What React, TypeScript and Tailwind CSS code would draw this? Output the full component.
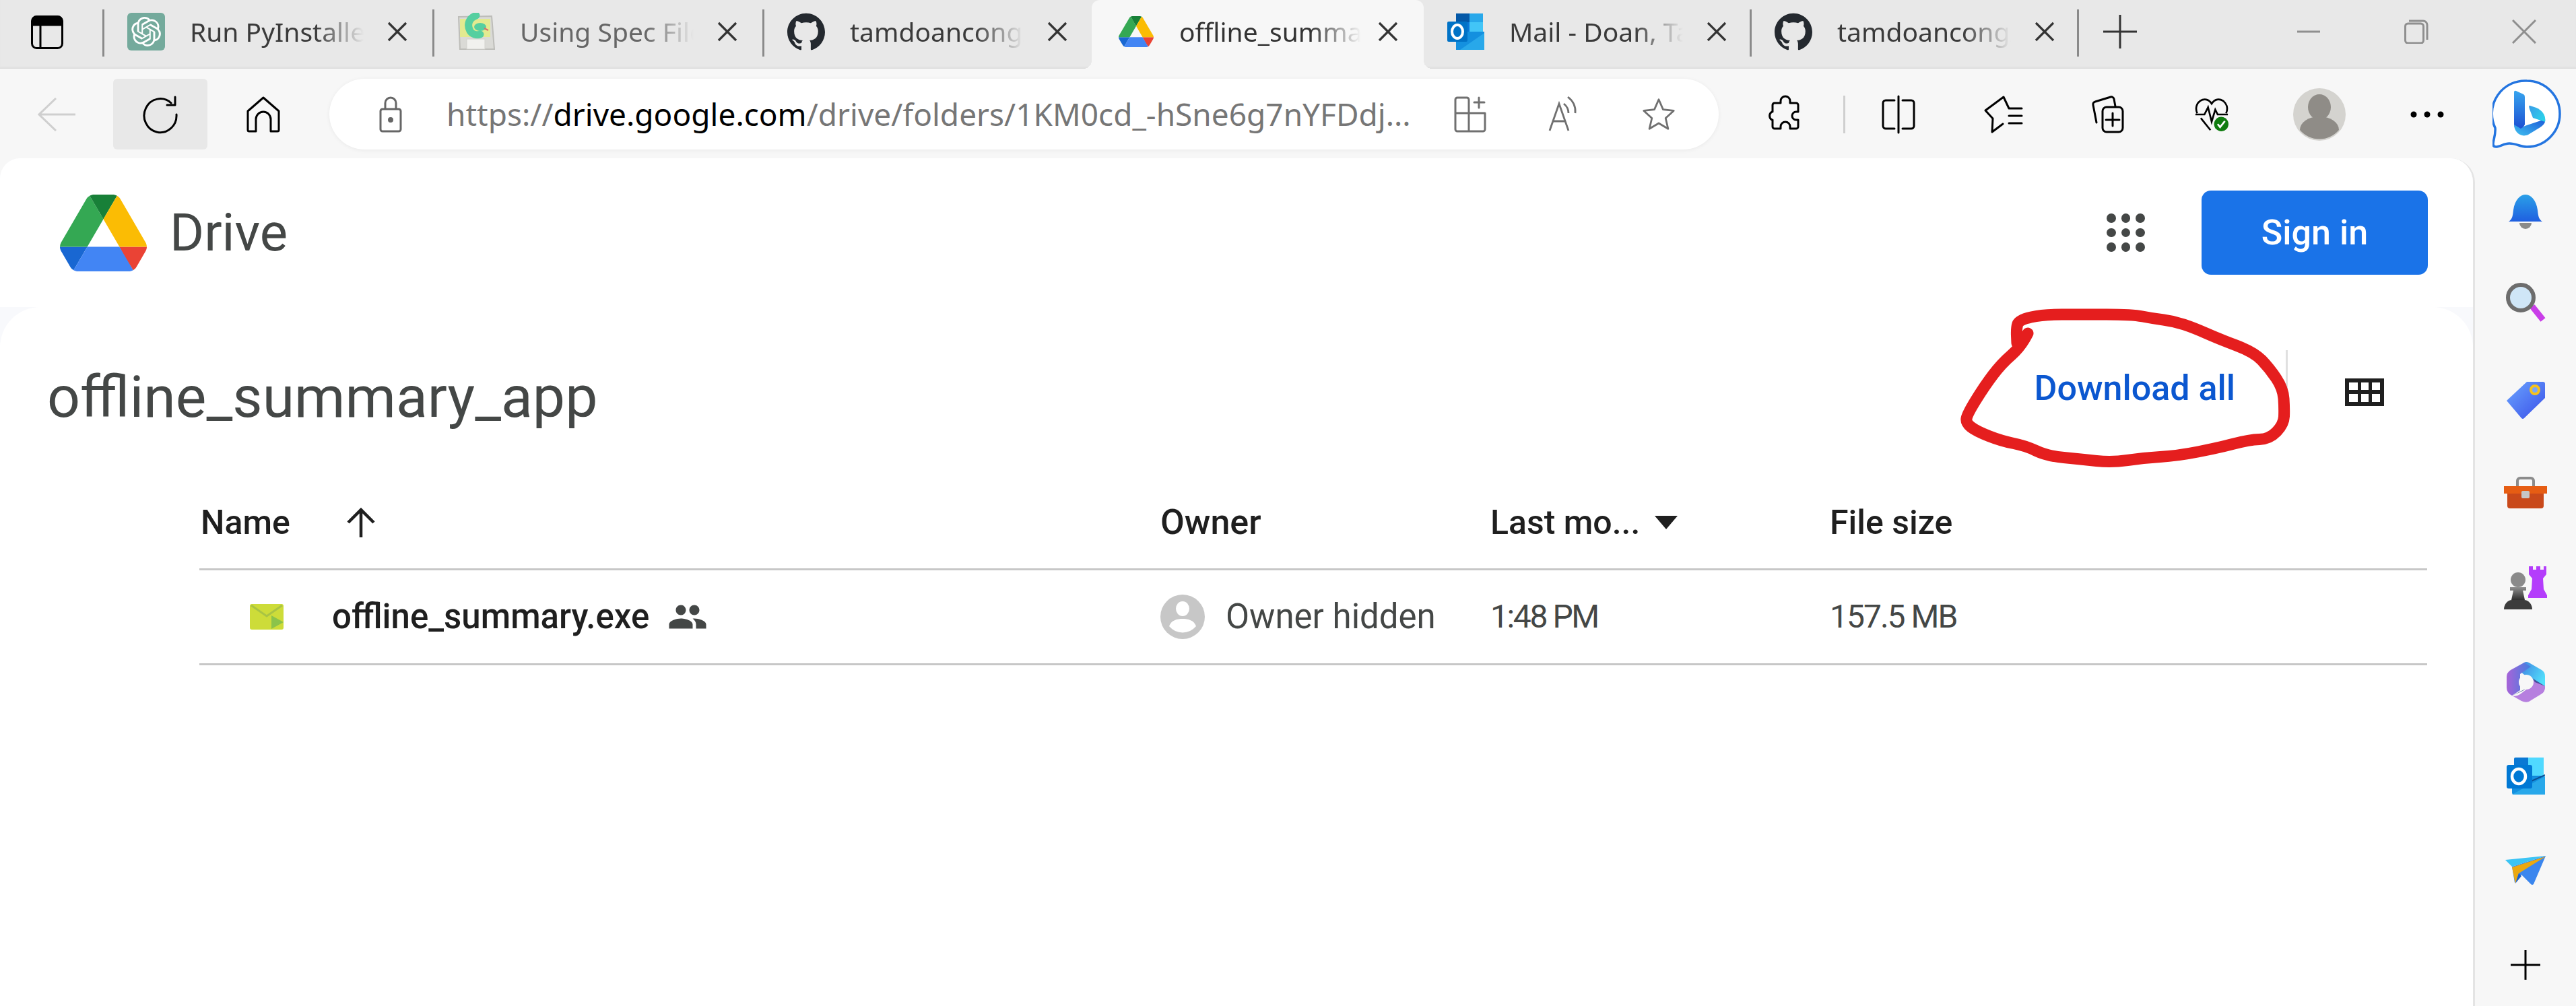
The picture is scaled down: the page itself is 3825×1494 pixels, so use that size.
import React from 'react';
import { SiOpenai, SiGithub } from 'react-icons/si';

const scribble: [number, number][] = [
  [3011, 495], [3001, 515], [2972, 540], [2947, 573], [2921, 615], [2919, 628], [2934, 640], [2972, 655],
  [3008, 662], [3039, 677], [3090, 682], [3136, 687], [3182, 680], [3233, 677], [3294, 665], [3340, 653],
  [3370, 652], [3391, 630], [3392, 607], [3390, 577], [3370, 547], [3347, 523], [3294, 503], [3258, 487],
  [3228, 477], [3197, 473], [3166, 467], [3090, 467], [3034, 467], [2998, 475], [2994, 487], [2995, 510],
];

const scribblePath = () => {
  let d = `M${scribble[0][0]} ${scribble[0][1]}`;
  for (let i = 1; i < scribble.length - 1; i++) {
    const [x, y] = scribble[i];
    const [nx, ny] = scribble[i + 1];
    d += ` Q${x} ${y} ${(x + nx) / 2} ${(y + ny) / 2}`;
  }
  const last = scribble[scribble.length - 1];
  return `${d} L${last[0]} ${last[1]}`;
};

const X = ({ color = '#333' }: { color?: string }) => (
  <svg viewBox="0 0 30 30" className="w-[30px] h-[30px] flex-none">
    <path d="M2 2 28 28M28 2 2 28" stroke={color} strokeWidth="3.2" fill="none" />
  </svg>
);

const Sep = () => <div className="w-[3px] h-[70px] bg-[#8a8a8a] flex-none mb-[4px]" />;

const DriveLogo = ({ className }: { className: string }) => (
  <svg viewBox="0 0 87.3 78" className={className} preserveAspectRatio="none">
    <path d="m6.6 66.85 3.85 6.65c.8 1.4 1.95 2.5 3.3 3.3l13.75-23.8h-27.5c0 1.55.4 3.1 1.2 4.5z" fill="#1967d2" />
    <path d="m43.65 25-13.75-23.8c-1.35.8-2.5 1.9-3.3 3.3l-25.4 44a9.06 9.06 0 0 0 -1.2 4.5h27.5z" fill="#34a853" />
    <path d="m73.55 76.8c1.35-.8 2.5-1.9 3.3-3.3l1.6-2.75 7.65-13.25c.8-1.4 1.2-2.95 1.2-4.5h-27.502l5.852 11.5z" fill="#ea4335" />
    <path d="m43.65 25 13.75-23.8c-1.35-.8-2.9-1.2-4.5-1.2h-18.5c-1.6 0-3.15.45-4.5 1.2z" fill="#188038" />
    <path d="m59.8 53h-32.3l-13.75 23.8c1.35.8 2.9 1.2 4.5 1.2h50.8c1.6 0 3.15-.45 4.5-1.2z" fill="#4285f4" />
    <path d="m73.4 26.5-12.7-22c-.8-1.4-1.95-2.5-3.3-3.3l-13.75 23.8 16.15 28h27.45c0-1.55-.4-3.1-1.2-4.5z" fill="#fbbc04" />
  </svg>
);

const GptIcon = () => (
  <div className="w-[56px] h-[56px] bg-[#74aa9c] rounded-[6px] flex items-center justify-center">
    <SiOpenai className="w-[44px] h-[44px] text-white" />
  </div>
);

const FloppyIcon = () => (
  <svg viewBox="0 0 56 56" className="w-[56px] h-[56px]">
    <path d="M2 6 51 5 55 54 4 54z" fill="#dadad6" stroke="#bdbdb9" strokeWidth="2" />
    <rect x="4" y="9" width="45" height="27" fill="#e2ea90" />
    <path d="M28 4C17 8 14 18 19 27c3 5 10 7 15 5" fill="none" stroke="#55cfa0" strokeWidth="11" strokeLinecap="round" />
    <ellipse cx="34" cy="21" rx="9" ry="6" fill="#55cfa0" />
    <path d="M40 23 46 26" stroke="#d86a6a" strokeWidth="2" />
    <rect x="14" y="39" width="27" height="15" fill="#f1f1ee" stroke="#d2d2ce" />
  </svg>
);

const GithubIcon = () => <SiGithub className="w-[56px] h-[56px] text-[#24292f]" />;

const OutlookIcon = () => (
  <svg viewBox="0 0 56 56" className="w-[56px] h-[56px]">
    <rect x="14" y="1" width="40" height="54" rx="2" fill="#0a76d6" />
    <rect x="14" y="1" width="20" height="13" fill="#0358a7" />
    <rect x="34" y="1" width="20" height="13" fill="#28a8ea" />
    <rect x="34" y="14" width="20" height="14" fill="#50d9ff" opacity="0.8" />
    <path d="M14 28 56 28V55H14z" fill="#1490df" />
    <path d="M20 55 56 30V55z" fill="#28a8ea" />
    <rect x="1" y="13" width="30" height="30" rx="2" fill="#0072c6" />
    <ellipse cx="16" cy="28" rx="8" ry="10" fill="none" stroke="#fff" strokeWidth="4" />
  </svg>
);

const Tab = ({ icon, label, active, grey, className }: {
  icon: React.ReactNode; label: string; active?: boolean; grey?: boolean; className: string;
}) => (
  <div className={`flex-none h-full flex items-center pb-[9px] relative ${className}`}>
    <div className="w-[56px] h-[56px] flex-none flex items-center justify-center">{icon}</div>
    <div
      className={`whitespace-nowrap overflow-hidden flex-none text-[39px] leading-[54px] [mask-image:linear-gradient(to_right,#000_72%,transparent_100%)] ${
        active ? 'ml-[36px] w-[270px] text-[#333]' : grey ? 'ml-[37px] w-[258px] text-[#666]' : 'ml-[37px] w-[258px] text-[#3a3a3a]'
      }`}
    >
      {label}
    </div>
    <div className={active ? 'ml-[25px]' : 'ml-[35px]'}><X /></div>
    {active && (
      <>
        <div className="absolute bottom-0 -left-[12px] w-[12px] h-[12px] bg-[radial-gradient(circle_at_0_0,transparent_12px,#f7f7f7_12px)]" />
        <div className="absolute bottom-0 -right-[12px] w-[12px] h-[12px] bg-[radial-gradient(circle_at_100%_0,transparent_12px,#f7f7f7_12px)]" />
      </>
    )}
  </div>
);

const Ico = ({ children, className = 'w-[50px] h-[56px]', vb = '0 0 50 56' }: { children: React.ReactNode; className?: string; vb?: string }) => (
  <svg viewBox={vb} className={`flex-none overflow-visible ${className}`} fill="none" stroke="#000" strokeWidth="3" strokeLinejoin="round" strokeLinecap="round">
    {children}
  </svg>
);

const BingIcon = () => (
  <svg viewBox="0 0 102 105" className="w-[102px] h-[105px] flex-none">
    <defs>
      <linearGradient id="bb" x1="0" y1="0" x2="0" y2="1">
        <stop offset="0" stopColor="#37a5ee" />
        <stop offset="1" stopColor="#1b49d0" />
      </linearGradient>
      <linearGradient id="bc" x1="0" y1="0" x2="1" y2="0.6">
        <stop offset="0" stopColor="#3b9ce8" />
        <stop offset="1" stopColor="#2bd0ea" />
      </linearGradient>
      <linearGradient id="bd" x1="0" y1="1" x2="1" y2="0">
        <stop offset="0" stopColor="#3fc0f0" />
        <stop offset="1" stopColor="#1d5ad8" />
      </linearGradient>
    </defs>
    <path d="M51 3a49 49 0 0 1 0 98c-10 0-16-5-26-5-8 0-14 5-20 5-3 0-4-2-4-4 0-6 4-14 3-24A49 49 0 0 1 51 3z" fill="#fff" stroke="#2475e0" strokeWidth="3.5" />
    <path d="M32 20q0-3 3-2l11 5q2 1 2 4V68l-6 10q-10-3-10-10z" fill="url(#bb)" />
    <path d="M32 68c0 11 10 20 21 15l18-11c6-4 8-8 7-12L48 70l-6 4z" fill="url(#bd)" />
    <path d="M56 40q-3-1-1 5l5 13 18 6c2-11-6-18-13-21z" fill="url(#bc)" />
  </svg>
);

const SideIcon = ({ children }: { children: React.ReactNode }) => (
  <svg viewBox="0 0 64 56" className="w-[64px] h-[56px] flex-none overflow-visible">{children}</svg>
);

const Sidebar = () => (
  <div className="w-[150px] flex-none flex flex-col items-center pt-[50px] gap-[84px]">
    <SideIcon>
      <defs>
        <linearGradient id="s1" x1="0" y1="0" x2="0" y2="1"><stop offset="0" stopColor="#2aa0e8" /><stop offset="1" stopColor="#1f5fe0" /></linearGradient>
      </defs>
      <path d="M23 46a9 9 0 0 0 18 0z" fill="#8a8a8a" />
      <path d="M7 44c6-4 6-9 7-17 2-16 11-23 18-23s16 7 18 23c1 8 1 13 7 17z" fill="url(#s1)" />
    </SideIcon>
    <SideIcon>
      <path d="M42 30 58 50" stroke="#c93ee8" strokeWidth="9" strokeLinecap="butt" />
      <circle cx="25" cy="17" r="19" fill="#cfe6f7" stroke="#6d6d6d" strokeWidth="6" />
    </SideIcon>
    <SideIcon>
      <defs>
        <linearGradient id="s3" x1="0" y1="0" x2="1" y2="1"><stop offset="0" stopColor="#6aa5ff" /><stop offset="1" stopColor="#3a4fe8" /></linearGradient>
      </defs>
      <path d="M4 30 34 2H58a3 3 0 0 1 3 3V26L30 56a3 3 0 0 1-4 0z" fill="url(#s3)" />
      <circle cx="46" cy="14" r="6" fill="#7aa8f8" stroke="#f6c21c" strokeWidth="4" />
    </SideIcon>
    <SideIcon>
      <path d="M20 18V9a4 4 0 0 1 4-4h16a4 4 0 0 1 4 4v9" fill="none" stroke="#8c8c8c" strokeWidth="4" />
      <path d="M0 17H64V28H0z" fill="#e65d13" />
      <path d="M5 28H59V46a4 4 0 0 1-4 4H9a4 4 0 0 1-4-4z" fill="#c9491a" />
      <rect x="26" y="24" width="12" height="11" rx="2" fill="#c6c6c6" />
    </SideIcon>
    <svg viewBox="0 0 64 64" className="w-[64px] h-[64px] -my-[4px] flex-none">
      <defs>
        <linearGradient id="s5" x1="0" y1="0" x2="0" y2="1"><stop offset="0" stopColor="#8f8f8f" /><stop offset="1" stopColor="#2f2f2f" /></linearGradient>
      </defs>
      <path d="M37 0h6v5h5V0h6v5h5V0h4v12l-5 6 1 16 5 9v4H36v-4l5-9 1-16-5-6z" fill="#b43dfb" />
      <circle cx="21" cy="20" r="11" fill="#8a8a8a" />
      <path d="M9 31H33V36H28L31 50H11L14 36H9z" fill="url(#s5)" />
      <path d="M0 64c0-8 6-14 12-14H30c6 0 12 6 12 14z" fill="#3c3c3c" />
    </svg>
    <svg viewBox="0 0 57 60" className="w-[57px] h-[60px] -my-[2px] flex-none">
      <defs>
        <linearGradient id="s6a" x1="0" y1="0" x2="1" y2="0"><stop offset="0" stopColor="#a863d8" /><stop offset="1" stopColor="#3f7fe0" /></linearGradient>
        <linearGradient id="s6b" x1="0" y1="0" x2="1" y2="0.6"><stop offset="0" stopColor="#3f7fe0" /><stop offset="1" stopColor="#52e0fc" /></linearGradient>
      </defs>
      <path d="M26 1Q29-1 33 1L52 12Q57 15 57 21V40L36 27 20 14z" fill="url(#s6b)" />
      <path d="M26 1 6 12Q0 16 0 22V38Q0 46 8 50L20 42V18L36 7z" fill="url(#s6a)" />
      <path d="M57 38Q57 45 51 48L33 59Q28 61 22 58L8 50Q14 52 20 48L36 36 40 26 57 36z" fill="#b67fdf" />
      <path d="M38 24 57 36 42 30zM8 50 20 44 36 36 22 44z" fill="#1d3a80" opacity="0.7" />
      <circle cx="29" cy="30" r="11" fill="#f7f7f7" />
    </svg>
    <svg viewBox="0 0 57 56" className="w-[57px] h-[56px] flex-none">
      <rect x="11" y="0" width="44" height="54" rx="2" fill="#0a78d4" />
      <rect x="32" y="0" width="23" height="27" fill="#50d9ff" />
      <path d="M8 28H57V52a3 3 0 0 1-3 3H11a3 3 0 0 1-3-3z" fill="#1490df" />
      <path d="M8 55 57 28V55z" fill="#28a8ea" />
      <path d="M30 38 57 26" stroke="#0c4f94" strokeWidth="2" />
      <rect x="0" y="11" width="38" height="35" rx="3" fill="#0078d4" />
      <ellipse cx="18" cy="28" rx="10" ry="11" fill="none" stroke="#fff" strokeWidth="4.5" />
    </svg>
    <svg viewBox="0 0 60 44" className="w-[60px] h-[44px] my-[6px] flex-none">
      <path d="M60 0 42 42Q40 44 38 42L24 28 14 40 10 16z" fill="#3b86ee" />
      <path d="M0 6 60 0 10 16z" fill="#3cc4f4" />
      <path d="M10 17 60 1 20 26 15 41z" fill="#eca80f" />
      <path d="M20 26 15 41 24 30z" fill="#1a5fc8" />
    </svg>
    <svg viewBox="0 0 44 44" className="w-[44px] h-[44px] mt-[6px] flex-none" stroke="#000" strokeWidth="3">
      <path d="M0 22H44M22 0V44" />
    </svg>
  </div>
);

const Row = ({ children, className }: { children: React.ReactNode; className: string }) => (
  <div className={`grid grid-cols-[1427px_492px_502px_1fr] items-center border-b-[3px] border-[#c7c7c7] ${className}`}>{children}</div>
);

export default function App() {
  return (
    <div className="w-[3825px] h-[1494px] overflow-hidden relative flex flex-col bg-[#f7f7f7] font-['Roboto',sans-serif]">
      {/* tab strip */}
      <div className="h-[102px] flex-none flex items-center bg-[#e8e8e8] font-['Noto_Sans',sans-serif] shadow-[inset_0_-3px_3px_-2px_#d4d4d4]">
        <div className="w-[152px] flex-none pl-[46px] pb-[6px]">
          <svg viewBox="0 0 48 50" className="w-[48px] h-[50px]" fill="none" stroke="#000" strokeWidth="3">
            <rect x="1.5" y="1.5" width="45" height="47" rx="7" />
            <path d="M2 14V8a6 6 0 0 1 6-6h32a6 6 0 0 1 6 6v6z" fill="#000" />
            <path d="M14 13V48" />
          </svg>
        </div>
        <Sep />
        <Tab className="w-[487px] pl-[34px]" icon={<GptIcon />} label="Run PyInstaller" />
        <Sep />
        <Tab className="w-[487px] pl-[34px]" icon={<FloppyIcon />} label="Using Spec Files" grey />
        <Sep />
        <Tab className="w-[486px] pl-[34px]" icon={<GithubIcon />} label="tamdoancong/" />
        <Tab className="w-[493px] pl-[38px] bg-[#f7f7f7] rounded-t-[12px]" icon={<DriveLogo className="w-[52px] h-[46px]" />} label="offline_summary" active />
        <Tab className="w-[484px] pl-[34px]" icon={<OutlookIcon />} label="Mail - Doan, Tam" />
        <Sep />
        <Tab className="w-[483px] pl-[34px]" icon={<GithubIcon />} label="tamdoancong/" />
        <Sep />
        <svg viewBox="0 0 50 50" className="w-[50px] h-[50px] ml-[36px] flex-none mb-[8px]" stroke="#333" strokeWidth="3">
          <path d="M0 25H50M25 0V50" />
        </svg>
        <div className="ml-auto pr-[59px] flex items-center gap-[124px] pb-[8px]">
          <svg viewBox="0 0 36 36" className="w-[36px] h-[36px]" stroke="#8f8f8f" strokeWidth="3"><path d="M1 18H35" /></svg>
          <svg viewBox="0 0 36 36" className="w-[36px] h-[36px]" stroke="#8f8f8f" strokeWidth="3" fill="none">
            <rect x="1.5" y="6" width="27" height="29" rx="4" />
            <path d="M7 2H28a6 6 0 0 1 6 6V30" />
          </svg>
          <svg viewBox="0 0 36 36" className="w-[36px] h-[36px]" stroke="#8f8f8f" strokeWidth="3"><path d="M1 1 35 35M35 1 1 35" /></svg>
        </div>
      </div>

      {/* toolbar */}
      <div className="h-[133px] flex-none flex items-center pl-[56px] pt-[2px]">
        <svg viewBox="0 0 56 50" className="w-[56px] h-[50px] flex-none" fill="none" stroke="#cfcfcf" strokeWidth="3">
          <path d="M2 25H56M27 1 2 25l25 24" />
        </svg>
        <div className="ml-[56px] w-[140px] h-[105px] flex-none rounded-[6px] bg-[#e8e8e8] flex items-center justify-center">
          <Ico className="w-[56px] h-[56px]" vb="0 0 56 56">
            <path d="M44 11A24 25 0 1 0 52 28" />
            <path d="M50 2V14H38" />
          </Ico>
        </div>
        <Ico className="w-[50px] h-[54px] ml-[58px]" vb="0 0 50 54">
          <path d="M25 2 48 22V50a2 2 0 0 1-2 2H36V34a11 11 0 0 0-22 0V52H4a2 2 0 0 1-2-2V22z" />
        </Ico>
        <div className="ml-[73px] w-[2063px] h-[105px] flex-none rounded-full bg-white shadow-[0_1px_6px_#0000000f] flex items-center pl-[74px] pr-[64px]">
          <svg viewBox="0 0 34 54" className="w-[34px] h-[54px] flex-none" fill="none" stroke="#666" strokeWidth="3">
            <rect x="2" y="19" width="30" height="33" rx="3" />
            <path d="M9 19V10a8 8 0 0 1 16 0v9" />
            <circle cx="17" cy="35" r="2.5" fill="#666" />
          </svg>
          <div className="ml-[66px] flex-none text-[46px] font-['Noto_Sans',sans-serif] text-[#767676] whitespace-nowrap">
            https://<span className="text-black">drive.google.com</span>/drive/folders/1KM0cd_-hSne6g7nYFDdj...
          </div>
          <div className="ml-auto flex items-center gap-[90px]">
            <Ico vb="0 0 50 56" className="w-[50px] h-[56px]">
              <g stroke="#707070">
                <path d="M3 26V6a3 3 0 0 1 3-3h14a3 3 0 0 1 3 3v20zM23 26H47V50a3 3 0 0 1-3 3H6a3 3 0 0 1-3-3V26M23 26V53M38 3V18M31 10H46" />
              </g>
            </Ico>
            <svg viewBox="0 0 50 56" className="w-[50px] h-[56px] flex-none" fill="none" stroke="#707070" strokeWidth="2.8">
              <path d="M3 52 17 12 31 52M8 38H26M30 2c8 6 12 14 11 24M24 12c5 4 7 8 7 14" />
            </svg>
            <Ico vb="0 0 54 54" className="w-[50px] h-[50px]">
              <path stroke="#707070" d="M27 3 34 19 51 21 38 33 42 50 27 41 12 50 16 33 3 21 20 19z" />
            </Ico>
          </div>
        </div>
        <Ico className="w-[50px] h-[56px] ml-[74px]" vb="0 0 50 56">
          <path d="M18 8a7 7 0 0 1 14 0v3h9a3 3 0 0 1 3 3v10h-3a6 6 0 0 0 0 12h3v10a3 3 0 0 1-3 3h-9v-3a7 7 0 0 0-14 0v3H9a3 3 0 0 1-3-3V36H5a7 7 0 0 1 0-12h1V14a3 3 0 0 1 3-3h9z" />
        </Ico>
        <div className="ml-[61px] w-[3px] h-[56px] bg-[#cfcfcf] flex-none" />
        <Ico className="w-[50px] h-[56px] ml-[54px]" vb="0 0 50 56">
          <path d="M19 7H6a4 4 0 0 0-4 4v34a4 4 0 0 0 4 4h13M31 7h13a4 4 0 0 1 4 4v34a4 4 0 0 1-4 4H31M25 1V55" />
        </Ico>
        <Ico className="w-[50px] h-[56px] ml-[106px]" vb="0 0 50 56">
          <path d="M33 19 25 2-2 22 9 34 8 54 24 42M33 19H52M33 30H52M33 41H52" />
        </Ico>
        <Ico className="w-[50px] h-[56px] ml-[104px]" vb="0 0 50 56">
          <path d="M9 40 4 14a4 4 0 0 1 3-5L30 2a4 4 0 0 1 5 3l2 11" />
          <rect x="18" y="17" width="30" height="37" rx="6" />
          <path d="M33 26V45M23 36H43" />
        </Ico>
        <svg viewBox="0 0 56 60" className="w-[50px] h-[56px] ml-[105px] flex-none" fill="none" stroke="#000" strokeWidth="3">
          <path d="M4 28C-4 10 18-4 28 12 38-4 60 10 52 28" />
          <path d="M1 30H16L22 18 28 42 34 22 38 30H55M10 36 26 56" />
          <circle cx="44" cy="46" r="12" fill="#107c10" stroke="none" />
          <path d="M38 46 42 51 50 41" stroke="#fff" />
        </svg>
        <svg viewBox="0 0 78 78" className="w-[78px] h-[78px] ml-[96px] flex-none">
          <circle cx="39" cy="39" r="39" fill="#d4d3cf" />
          <ellipse cx="39" cy="28" rx="17" ry="19" fill="#8f8c87" />
          <path d="M10 62a29 20 0 0 1 58 0 38 38 0 0 1-58 0z" fill="#8f8c87" />
        </svg>
        <svg viewBox="0 0 50 10" className="w-[50px] h-[10px] ml-[96px] flex-none" fill="#000">
          <circle cx="5" cy="5" r="4.5" /><circle cx="25" cy="5" r="4.5" /><circle cx="45" cy="5" r="4.5" />
        </svg>
        <div className="ml-[72px]"><BingIcon /></div>
      </div>

      {/* page + sidebar */}
      <div className="flex-1 flex min-h-0">
        <div className="w-[3675px] flex-none flex flex-col border-r-[3px] border-[#e4e4e4] rounded-tr-[36px] rounded-tl-[30px] bg-[#f8f9fc] overflow-hidden">
          <div className="h-[221px] flex-none bg-white flex items-center pl-[89px] pr-[67px]">
            <DriveLogo className="w-[129px] h-[114px] flex-none" />
            <div className="ml-[34px] text-[78px] leading-[100px] text-[#444746]">Drive</div>
            <div className="ml-auto grid grid-cols-3 gap-x-[8px] gap-y-[8px] w-[57px]">
              {Array.from({ length: 9 }).map((_, i) => (
                <div key={i} className="w-[13.5px] h-[13.5px] rounded-full bg-[#444746]" />
              ))}
            </div>
            <button className="ml-[84px] w-[336px] h-[125px] rounded-[14px] bg-[#1a73e8] text-white text-[52px] font-[480]">Sign in</button>
          </div>
          <div className="flex-1 bg-white rounded-t-[60px] pr-[68px]">
            <div className="h-[250px] flex items-start">
              <div className="ml-[70px] mt-[84px] text-[86px] leading-[100px] text-[#444746]">offline_summary_app</div>
              <div className="ml-auto mt-[91px] text-[52px] leading-[60px] font-[480] text-[#0b57d0]">Download all</div>
              <div className="ml-[75px] mt-[64px] w-[3px] h-[90px] bg-[#e0e0e0]" />
              <svg viewBox="0 0 58 41" className="ml-[85px] mt-[106px] mr-[64px] w-[58px] h-[41px] flex-none">
                <path d="M0 0H58V41H0zM6 6V17H19V6zM24 6V17H35V6zM40 6V17H52V6zM6 23V35H19V23zM24 23V35H35V23zM40 23V35H52V23z" fill="#1f1f1f" fillRule="evenodd" />
              </svg>
            </div>
            <div className="ml-[296px]">
              <Row className="h-[141px] text-[50px] font-[480] text-[#1f1f1f] pt-[2px]">
                <div className="pl-[2px] flex items-center">
                  Name
                  <svg viewBox="0 0 42 44" className="w-[42px] h-[44px] ml-[84px]" fill="none" stroke="#1f1f1f" strokeWidth="4.5">
                    <path d="M21 44V3M2 22 21 3l19 19" />
                  </svg>
                </div>
                <div className="text-[52px]">Owner</div>
                <div className="flex items-center -ml-[2px]">
                  Last mo...
                  <svg viewBox="0 0 34 20" className="w-[34px] h-[20px] ml-[22px]"><path d="M0 0H34L17 20z" fill="#1f1f1f" /></svg>
                </div>
                <div>File size</div>
              </Row>
              <Row className="h-[141px] text-[51px] text-[#444746]">
                <div className="flex items-center pl-[75px]">
                  <svg viewBox="0 0 50 38" className="w-[50px] h-[38px] flex-none">
                    <rect width="50" height="38" rx="3" fill="#cddc39" />
                    <path d="M2 2 25 18 48 2" fill="none" stroke="#a9c444" strokeWidth="3" />
                    <path d="M32 17 50 27 32 37z" fill="#8bc34a" />
                  </svg>
                  <span className="ml-[72px] text-[51px] font-[480] text-[#1f1f1f]">offline_summary.exe</span>
                  <svg viewBox="0 0 24 24" className="w-[60px] h-[60px] ml-[27px] flex-none" fill="#444746">
                    <path d="M16 11c1.66 0 2.99-1.34 2.99-3S17.66 5 16 5c-1.66 0-3 1.34-3 3s1.34 3 3 3zm-8 0c1.66 0 2.99-1.34 2.99-3S9.66 5 8 5C6.34 5 5 6.34 5 8s1.34 3 3 3zm0 2c-2.33 0-7 1.17-7 3.5V19h14v-2.5c0-2.33-4.67-3.5-7-3.5zm8 0c-.29 0-.62.02-.97.05 1.16.84 1.97 1.97 1.97 3.45V19h6v-2.5c0-2.33-4.67-3.5-7-3.5z" />
                  </svg>
                </div>
                <div className="flex items-center">
                  <svg viewBox="0 0 66 66" className="w-[66px] h-[66px] flex-none">
                    <circle cx="33" cy="33" r="33" fill="#c7c7c7" />
                    <ellipse cx="33" cy="21" rx="10" ry="11" fill="#fff" />
                    <path d="M13 47c3-9 12-11 20-11s17 2 20 11a26 26 0 0 1-40 0z" fill="#fff" />
                  </svg>
                  <span className="ml-[31px]">Owner hidden</span>
                </div>
                <div className="-ml-[2px] text-[48px] tracking-[-2.4px]">1:48 PM</div>
                <div className="text-[48px] tracking-[-2px]">157.5 MB</div>
              </Row>
            </div>
          </div>
        </div>
        <Sidebar />
      </div>

      {/* hand drawn circle over the download button */}
      <svg viewBox="0 0 3825 1494" className="absolute top-0 left-0 w-[3825px] h-[1494px] pointer-events-none">
        <path d={scribblePath()} fill="none" stroke="#e51e1e" strokeWidth="17" strokeLinecap="round" strokeLinejoin="round" />
      </svg>
    </div>
  );
}
